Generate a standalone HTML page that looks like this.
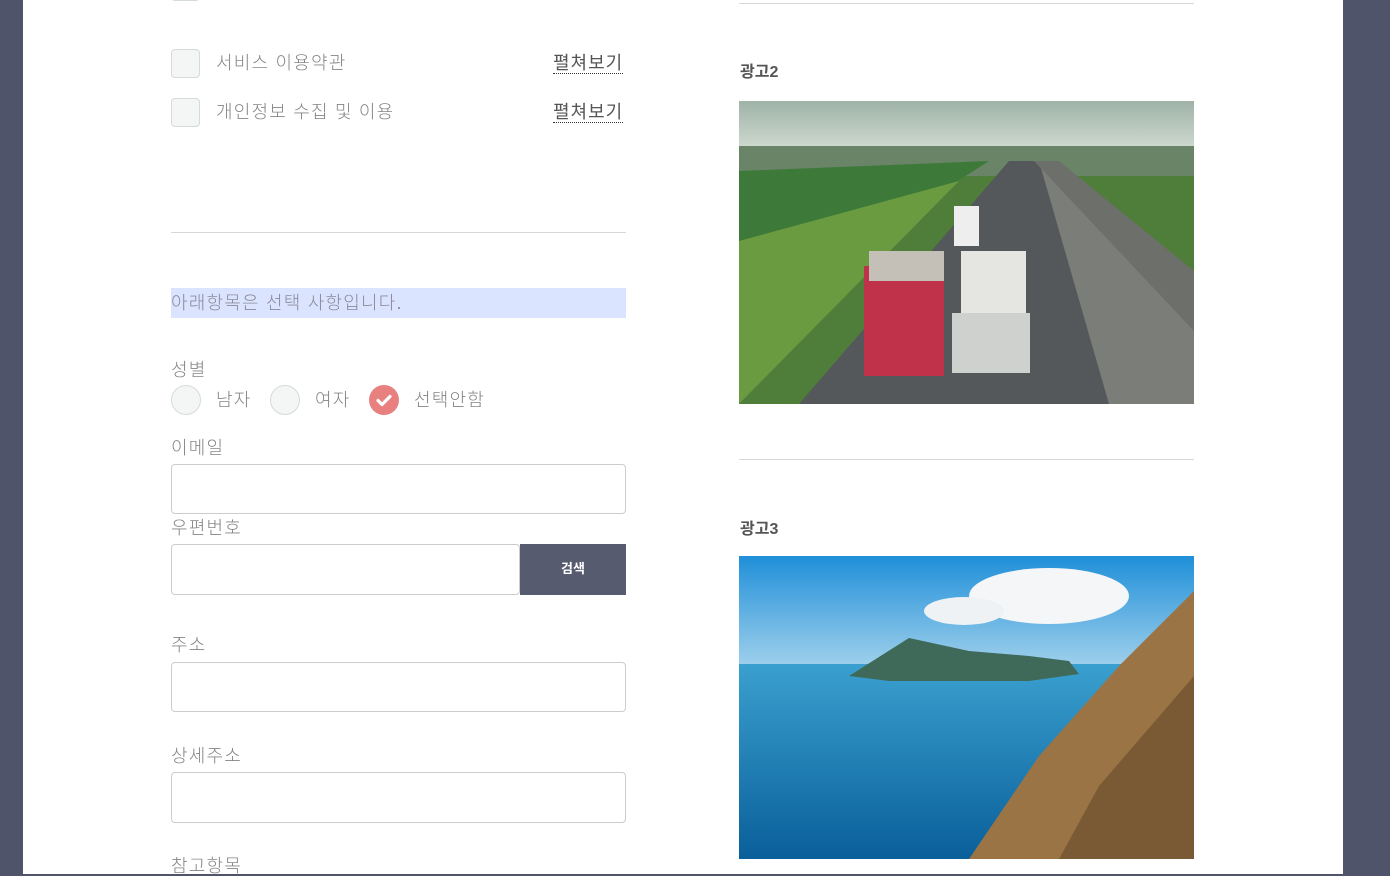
<!DOCTYPE html>
<html><head><meta charset="utf-8"><style>
*{box-sizing:border-box;margin:0;padding:0}
body{width:1390px;height:874px;overflow:hidden;background:#50546b;font-family:"Liberation Sans","Noto Sans CJK KR",sans-serif;position:relative}
.page{position:absolute;left:23px;top:0;width:1320px;height:874px;background:#fff}
.a{position:absolute}
.t{color:#858585;font-size:18px;line-height:1;letter-spacing:1.2px;font-weight:300}
.cb{width:29px;height:29px;border:1px solid #d5dadb;border-radius:4px;background:#f3f6f5}
.rd{width:30px;height:30px;border:1px solid #d5dadb;border-radius:50%;background:#f3f6f5}
.inp{border:1px solid #ccc;border-radius:4px;background:#fff;height:50px}
.more{color:#555;font-size:18px;border-bottom:1px dotted #333;padding-bottom:1px;line-height:1;letter-spacing:1px}
.hr{height:1px;background:#d8d8d8}
</style></head><body>
<div class="page"></div>
<div class="a cb" style="left:171px;top:-28px"></div>
<div class="a cb" style="left:171px;top:49px"></div>
<div class="a t" style="left:216px;top:54px">서비스 이용약관</div>
<div class="a more" style="left:553px;top:54px">펼쳐보기</div>
<div class="a cb" style="left:171px;top:98px"></div>
<div class="a t" style="left:216px;top:103px">개인정보 수집 및 이용</div>
<div class="a more" style="left:553px;top:103px">펼쳐보기</div>
<div class="a hr" style="left:171px;top:232px;width:455px"></div>
<div class="a" style="left:171px;top:288px;width:455px;height:30px;background:#dbe4ff"></div>
<div class="a t" style="left:171px;top:294px;color:#8a8a9a">아래항목은 선택 사항입니다.</div>
<div class="a t" style="left:171px;top:361px">성별</div>
<div class="a rd" style="left:171px;top:385px"></div>
<div class="a t" style="left:216px;top:391px">남자</div>
<div class="a rd" style="left:270px;top:385px"></div>
<div class="a t" style="left:315px;top:391px">여자</div>
<div class="a" style="left:369px;top:385px;width:30px;height:30px;border-radius:50%;background:#e88080"><svg width="30" height="30"><path d="M9 15.5l4 4 8-8" stroke="#fff" stroke-width="3.2" fill="none" stroke-linecap="round" stroke-linejoin="round"/></svg></div>
<div class="a t" style="left:414px;top:391px">선택안함</div>
<div class="a t" style="left:171px;top:439px">이메일</div>
<div class="a inp" style="left:171px;top:464px;width:455px"></div>
<div class="a t" style="left:171px;top:519px">우편번호</div>
<div class="a inp" style="left:171px;top:544px;width:349px;height:51px"></div>
<div class="a" style="left:520px;top:544px;width:106px;height:51px;background:#575b70;color:#fff;font-size:13px;font-weight:bold;text-align:center;line-height:49px">검색</div>
<div class="a t" style="left:171px;top:636px">주소</div>
<div class="a inp" style="left:171px;top:662px;width:455px"></div>
<div class="a t" style="left:171px;top:747px">상세주소</div>
<div class="a inp" style="left:171px;top:772px;width:455px;height:51px"></div>
<div class="a t" style="left:171px;top:857px">참고항목</div>

<div class="a hr" style="left:739px;top:3px;width:455px"></div>
<div class="a" style="left:740px;top:58px;font-size:16px;font-weight:bold;color:#555">광고2</div>
<div class="a" style="left:739px;top:101px;width:455px;height:303px;overflow:hidden">
<svg width="455" height="303">
<defs><linearGradient id="s1" x1="0" y1="0" x2="0" y2="1"><stop offset="0" stop-color="#9fb3a8"/><stop offset="1" stop-color="#d7dfd6"/></linearGradient></defs>
<rect width="455" height="303" fill="#4f7d3a"/>
<rect width="455" height="55" fill="url(#s1)"/>
<rect y="45" width="455" height="30" fill="#6a8468"/>
<polygon points="0,70 250,60 0,220" fill="#3d7a3a"/>
<polygon points="0,140 220,80 0,303" fill="#6b9b40"/>
<polygon points="270,60 60,303 455,303 455,240 300,60" fill="#55585a"/>
<polygon points="300,60 370,303 455,303 455,230" fill="#7a7d78"/>
<polygon points="295,60 320,60 455,170 455,230" fill="#6c6f6a"/>
<rect x="125" y="165" width="80" height="110" fill="#c0324a"/>
<rect x="130" y="150" width="75" height="30" fill="#c4c0b8"/>
<rect x="222" y="150" width="65" height="120" fill="#e5e5e2"/>
<rect x="213" y="212" width="78" height="60" fill="#cfd1cf"/>
<rect x="215" y="105" width="25" height="40" fill="#eee"/>
</svg></div>
<div class="a hr" style="left:739px;top:459px;width:455px"></div>
<div class="a" style="left:740px;top:515px;font-size:16px;font-weight:bold;color:#555">광고3</div>
<div class="a" style="left:739px;top:556px;width:455px;height:303px;overflow:hidden">
<svg width="455" height="303">
<defs><linearGradient id="s2" x1="0" y1="0" x2="0" y2="1"><stop offset="0" stop-color="#1f8fd8"/><stop offset="1" stop-color="#9fd0ec"/></linearGradient>
<linearGradient id="w2" x1="0" y1="0" x2="0" y2="1"><stop offset="0" stop-color="#3aa0cf"/><stop offset="1" stop-color="#0a5f9a"/></linearGradient></defs>
<rect width="455" height="110" fill="url(#s2)"/>
<ellipse cx="310" cy="40" rx="80" ry="28" fill="#f4f6f8"/>
<ellipse cx="225" cy="55" rx="40" ry="14" fill="#eef2f5"/>
<rect y="108" width="455" height="195" fill="url(#w2)"/>
<polygon points="110,120 170,82 230,95 290,100 330,105 340,118 290,125 150,125" fill="#3f6a5a"/>
<polygon points="455,35 380,110 300,200 230,303 455,303" fill="#9b7445"/>
<polygon points="455,120 360,230 320,303 455,303" fill="#7a5a34"/>
</svg></div>
</body></html>
